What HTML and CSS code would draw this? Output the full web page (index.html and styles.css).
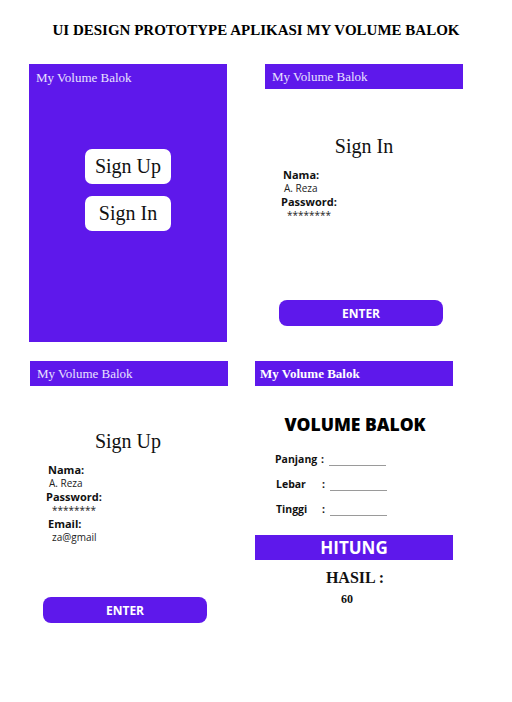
FILE: index.html
```html
<!DOCTYPE html>
<html lang="id">
<head>
<meta charset="UTF-8">
<meta name="viewport" content="width=device-width, initial-scale=1.0">
<title>UI Design Prototype Aplikasi My Volume Balok</title>
<link rel="stylesheet" href="styles.css">
</head>
<body>

<h1 class="page-title">UI DESIGN PROTOTYPE APLIKASI MY VOLUME BALOK</h1>

<div class="board">

  <!-- layar awal -->
  <section class="screen screen--home">
    <div class="home-title">My Volume Balok</div>
    <div class="home-buttons">
      <button class="home-btn">Sign Up</button>
      <button class="home-btn">Sign In</button>
    </div>
  </section>

  <!-- sign in -->
  <section class="screen screen--signin">
    <div class="appbar">My Volume Balok</div>
    <h2 class="screen-heading">Sign In</h2>
    <div class="fields">
      <div class="label">Nama:</div>
      <div class="value">A. Reza</div>
      <div class="label label--wide">Password:</div>
      <div class="value value--secret">********</div>
    </div>
    <button class="enter-btn">ENTER</button>
  </section>

  <!-- sign up -->
  <section class="screen screen--signup">
    <div class="appbar">My Volume Balok</div>
    <h2 class="screen-heading">Sign Up</h2>
    <div class="fields">
      <div class="label">Nama:</div>
      <div class="value">A. Reza</div>
      <div class="label label--wide">Password:</div>
      <div class="value value--secret">********</div>
      <div class="label">Email:</div>
      <div class="value value--secret">za@gmail</div>
    </div>
    <button class="enter-btn">ENTER</button>
  </section>

  <!-- hitung volume -->
  <section class="screen screen--calc">
    <div class="appbar appbar--bold">My Volume Balok</div>
    <h2 class="calc-heading">VOLUME BALOK</h2>
    <div class="calc-rows">
      <div class="calc-row">
        <span class="calc-label">Panjang</span><span class="calc-colon">:</span><span class="calc-line"></span>
      </div>
      <div class="calc-row">
        <span class="calc-label">Lebar</span><span class="calc-colon">:</span><span class="calc-line"></span>
      </div>
      <div class="calc-row">
        <span class="calc-label">Tinggi</span><span class="calc-colon">:</span><span class="calc-line"></span>
      </div>
    </div>
    <div class="hitung">HITUNG</div>
    <div class="hasil">HASIL :</div>
    <div class="hasil-value">60</div>
  </section>

</div>

</body>
</html>
```

FILE: styles.css
```css
body {
  margin: 0;
  padding: 0;
  background-color: #fff;
  font-family: "Open Sans", sans-serif;
  color: #111;
}
.page-title {
  margin: 0;
  padding-top: 20px;
  height: 64px;
  box-sizing: border-box;
  text-align: center;
  font-family: "Liberation Serif", serif;
  font-size: 15px;
  font-weight: bold;
  line-height: 20px;
  color: #000;
}
.board {
  display: grid;
  grid-template-columns: 226px 210px;
  grid-template-rows: 278px 280px;
  row-gap: 19px;
  padding-left: 29px;
}
.screen {
  width: 198px;
  box-sizing: border-box;
}
.screen--signin {
  margin-left: 10px;
}
.screen--signup {
  margin-left: 1px;
}
.screen--home {
  background-color: #5e18eb;
  display: flex;
  flex-direction: column;
}
.home-title,
.appbar {
  font-family: "Liberation Serif", serif;
  font-size: 13px;
  color: #e9e2ff;
}
.home-title {
  padding: 6px 0 0 7px;
  line-height: 16px;
}
.home-buttons {
  display: flex;
  flex-direction: column;
  align-items: center;
  gap: 12px;
  margin-top: 63px;
}
.home-btn {
  width: 86px;
  height: 35px;
  border: none;
  border-radius: 7px;
  background-color: #fff;
  font-family: "Liberation Serif", serif;
  font-size: 20px;
  color: #111;
  padding: 0;
}
.appbar {
  height: 25px;
  line-height: 26px;
  padding-left: 7px;
  background-color: #5e18eb;
}
.appbar--bold {
  font-weight: bold;
  color: #fff;
  padding-left: 5px;
}
.screen-heading {
  margin: 45px 0 0;
  font-family: "Liberation Serif", serif;
  font-size: 20px;
  font-weight: normal;
  line-height: 24px;
  text-align: center;
  color: #111;
}
.screen--signup .screen-heading {
  margin-top: 43px;
  padding-right: 2px;
}
.fields {
  margin-top: 10px;
  padding-left: 16px;
}
.label {
  font-size: 11px;
  font-weight: bold;
  line-height: 13.5px;
  padding-left: 2px;
  color: #111;
}
.label--wide {
  padding-left: 0;
}
.value {
  font-size: 10px;
  line-height: 13.5px;
  padding-left: 3px;
  color: #222;
}
.value--secret {
  padding-left: 6px;
}
.enter-btn {
  display: block;
  width: 164px;
  height: 26px;
  margin-left: 14px;
  border: none;
  border-radius: 8px;
  background-color: #5e18eb;
  color: #fff;
  font-family: "Open Sans", sans-serif;
  font-size: 12px;
  font-weight: bold;
  padding: 0;
}
.screen--signin .enter-btn {
  margin-top: 78px;
}
.screen--signup .enter-btn {
  margin-top: 53px;
  margin-left: 13px;
}
.calc-heading {
  margin: 26px 0 0;
  font-size: 17.5px;
  font-weight: 800;
  line-height: 24px;
  text-align: center;
  padding-left: 2px;
  color: #000;
}
.calc-rows {
  display: flex;
  flex-direction: column;
  gap: 11px;
  margin-top: 16px;
  padding-left: 20px;
}
.calc-row {
  display: flex;
  align-items: flex-end;
  height: 14px;
  font-size: 10.5px;
  font-weight: bold;
  line-height: 14px;
}
.calc-label {
  width: 46px;
  padding-left: 1px;
}
.calc-row:first-child .calc-label {
  padding-left: 0;
}
.calc-colon {
  width: 8px;
}
.calc-line {
  width: 57px;
  border-bottom: 1px solid #9a9a9a;
}
.hitung {
  margin-top: 19px;
  height: 25px;
  background-color: #5e18eb;
  color: #fff;
  font-size: 17px;
  font-weight: bold;
  line-height: 26px;
  text-align: center;
}
.hasil {
  margin-top: 9px;
  font-family: "Liberation Serif", serif;
  font-size: 16px;
  font-weight: bold;
  line-height: 18px;
  text-align: center;
  padding-left: 2px;
}
.hasil-value {
  margin-top: 5px;
  font-family: "Liberation Serif", serif;
  font-size: 12px;
  font-weight: bold;
  line-height: 14px;
  text-align: center;
  padding-right: 14px;
}
```
